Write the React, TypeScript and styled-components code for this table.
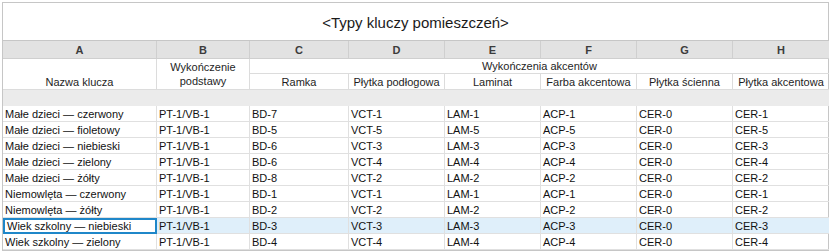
import React from "react";
import styled, { createGlobalStyle } from "styled-components";

const GlobalStyle = createGlobalStyle`
  html, body { margin: 0; padding: 0; background: #ffffff; }
  body { font-family: "Liberation Sans", Arial, sans-serif; }
`;

const Frame = styled.div`
  margin: 2px 0 0 2px;
  width: 827px;
  box-sizing: border-box;
  border: 1px solid #c6c6c6;
  background: #ffffff;
`;

const Title = styled.div`
  height: 38px;
  border-bottom: 1px solid #c6c6c6;
  display: flex;
  align-items: center;
  justify-content: center;
  font-size: 15px;
  color: #1a1a1a;
  padding-top: 1px;
  box-sizing: border-box;
`;

const Sheet = styled.table`
  border-collapse: separate;
  border-spacing: 0;
  table-layout: fixed;
  width: 826px;
  font-size: 11px;
  line-height: 14px;
  color: #111111;
`;

const Row = styled.tr<{ $h: number; $bg?: string }>`
  height: ${(p) => p.$h}px;
  background: ${(p) => p.$bg ?? "transparent"};
`;

const LetterCell = styled.td`
  padding: 0;
  background: #e2e2e2;
  border-right: 1px solid #cfcfcf;
  border-bottom: 1px solid #cfcfcf;
  text-align: center;
  font-weight: bold;
  color: #3c3c3c;
  vertical-align: middle;
  &:last-child { border-right: none; }
`;

const HeadCell = styled.td<{ $valign?: string }>`
  padding: 0 2px;
  text-align: center;
  vertical-align: ${(p) => p.$valign ?? "middle"};
  color: #1e1e1e;
  border-right: 1px solid #dcdcdc;
  border-bottom: 1px solid #dcdcdc;
  white-space: nowrap;
  overflow: hidden;
  &:last-child { border-right: none; }
`;

const Band = styled.td`
  padding: 0;
  background: #ebebeb;
`;

const Cell = styled.td<{ $selected?: boolean }>`
  padding: 0 0 0 ${(p) => (p.$selected ? 4 : 2)}px;
  border-right: 1px solid #e0e0e0;
  border-bottom: 1px solid #e0e0e0;
  white-space: nowrap;
  overflow: hidden;
  vertical-align: middle;
  background: ${(p) => (p.$selected ? "#ffffff" : "transparent")};
  outline: ${(p) => (p.$selected ? "2px solid #1f87c9" : "none")};
  outline-offset: -2px;
  &:last-child { border-right: none; }
`;

const widths = [154, 93, 99, 96, 96, 96, 96, 96];
const letters = ["A", "B", "C", "D", "E", "F", "G", "H"];
const subHeads = ["Ramka", "Płytka podłogowa", "Laminat", "Farba akcentowa", "Płytka ścienna", "Płytka akcentowa"];

type DataRow = { name: string; b: string; c: string; d: string; e: string; f: string; g: string; h: string; selected?: boolean };

const rows: DataRow[] = [
  { name: "Małe dzieci — czerwony", b: "PT-1/VB-1", c: "BD-7", d: "VCT-1", e: "LAM-1", f: "ACP-1", g: "CER-0", h: "CER-1" },
  { name: "Małe dzieci — fioletowy", b: "PT-1/VB-1", c: "BD-5", d: "VCT-5", e: "LAM-5", f: "ACP-5", g: "CER-0", h: "CER-5" },
  { name: "Małe dzieci — niebieski", b: "PT-1/VB-1", c: "BD-6", d: "VCT-3", e: "LAM-3", f: "ACP-3", g: "CER-0", h: "CER-3" },
  { name: "Małe dzieci — zielony", b: "PT-1/VB-1", c: "BD-6", d: "VCT-4", e: "LAM-4", f: "ACP-4", g: "CER-0", h: "CER-4" },
  { name: "Małe dzieci — żółty", b: "PT-1/VB-1", c: "BD-8", d: "VCT-2", e: "LAM-2", f: "ACP-2", g: "CER-0", h: "CER-2" },
  { name: "Niemowlęta — czerwony", b: "PT-1/VB-1", c: "BD-1", d: "VCT-1", e: "LAM-1", f: "ACP-1", g: "CER-0", h: "CER-1" },
  { name: "Niemowlęta — żółty", b: "PT-1/VB-1", c: "BD-2", d: "VCT-2", e: "LAM-2", f: "ACP-2", g: "CER-0", h: "CER-2" },
  { name: "Wiek szkolny — niebieski", b: "PT-1/VB-1", c: "BD-3", d: "VCT-3", e: "LAM-3", f: "ACP-3", g: "CER-0", h: "CER-3", selected: true },
  { name: "Wiek szkolny — zielony", b: "PT-1/VB-1", c: "BD-4", d: "VCT-4", e: "LAM-4", f: "ACP-4", g: "CER-0", h: "CER-4" },
];

export default function App() {
  return (
    <>
      <GlobalStyle />
      <Frame>
        <Title>&lt;Typy kluczy pomieszczeń&gt;</Title>
        <Sheet>
          <colgroup>
            {widths.map((w, i) => (
              <col key={i} style={{ width: w }} />
            ))}
          </colgroup>
          <tbody>
            <Row $h={18}>
              {letters.map((l) => (
                <LetterCell key={l}>{l}</LetterCell>
              ))}
            </Row>
            <Row $h={15}>
              <HeadCell rowSpan={2} $valign="bottom">
                Nazwa klucza
              </HeadCell>
              <HeadCell rowSpan={2}>
                Wykończenie
                <br />
                podstawy
              </HeadCell>
              <HeadCell colSpan={6}>Wykończenia akcentów</HeadCell>
            </Row>
            <Row $h={16}>
              {subHeads.map((s) => (
                <HeadCell key={s}>{s}</HeadCell>
              ))}
            </Row>
            <Row $h={16}>
              <Band colSpan={8} />
            </Row>
            {rows.map((r) => (
              <Row key={r.name} $h={16} $bg={r.selected ? "#dfeffa" : undefined}>
                <Cell $selected={r.selected}>{r.name}</Cell>
                <Cell>{r.b}</Cell>
                <Cell>{r.c}</Cell>
                <Cell>{r.d}</Cell>
                <Cell>{r.e}</Cell>
                <Cell>{r.f}</Cell>
                <Cell>{r.g}</Cell>
                <Cell>{r.h}</Cell>
              </Row>
            ))}
          </tbody>
        </Sheet>
      </Frame>
    </>
  );
}
